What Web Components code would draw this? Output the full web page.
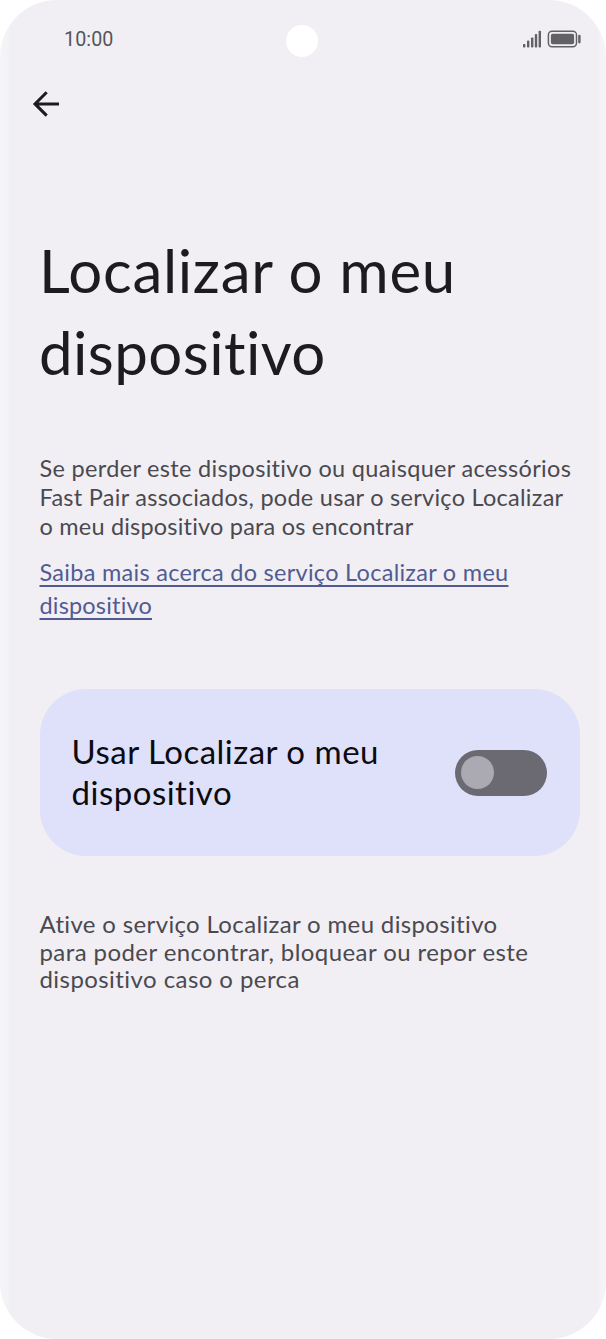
<!DOCTYPE html>
<html lang="pt">
<head>
<meta charset="utf-8">
<title>Localizar o meu dispositivo</title>
<style>
  html, body{ margin:0; background:#fff; }
  body{ font-family:Lato,"Open Sans",sans-serif; color:#1c1b20; }
</style>
</head>
<body>
<phone-screen>
  <status-bar slot="status">10:00</status-bar>
  <back-button slot="nav"></back-button>
  <page-title>
    <text-line style="--track:.7px">Localizar o meu</text-line>
    <text-line style="--track:.42px">dispositivo</text-line>
  </page-title>
  <info-text style="--top:60.6px; --lh:28.9px">
    <text-line style="--track:.32px">Se perder este dispositivo ou quaisquer acessórios</text-line>
    <text-line style="--track:.27px">Fast Pair associados, pode usar o serviço Localizar</text-line>
    <text-line style="--track:.2px">o meu dispositivo para os encontrar</text-line>
  </info-text>
  <info-link>
    <text-line style="--track:.28px">Saiba mais acerca do serviço Localizar o meu</text-line>
    <text-line style="--track:.18px">dispositivo</text-line>
  </info-link>
  <switch-card>
    <text-line style="--track:.5px">Usar Localizar o meu</text-line>
    <text-line style="--track:.5px">dispositivo</text-line>
    <toggle-switch slot="control"></toggle-switch>
  </switch-card>
  <info-text style="--top:54.4px; --lh:27.2px; --size:24px">
    <text-line style="--track:.35px">Ative o serviço Localizar o meu dispositivo</text-line>
    <text-line style="--track:.42px">para poder encontrar, bloquear ou repor este</text-line>
    <text-line style="--track:.43px">dispositivo caso o perca</text-line>
  </info-text>
</phone-screen>

<script>
const define = (name, html) => {
  const tpl = document.createElement('template')
  tpl.innerHTML = html
  customElements.define(name, class extends HTMLElement{
    constructor(){
      super()
      this.attachShadow({mode:'open'}).appendChild(tpl.content.cloneNode(true))
    }
  })
}

// one line of text, tracked with --track
define('text-line', `
  <style>
    :host{ display:block; white-space:nowrap; }
    span{ letter-spacing:var(--track, 0); text-decoration:var(--line, none); text-decoration-thickness:2px; text-underline-offset:3.5px; text-decoration-skip-ink:none; }
  </style>
  <span><slot></slot></span>
`)

define('phone-screen', `
  <style>
    :host{
      display:flex; flex-direction:column; box-sizing:border-box;
      width:606px; height:1339px; overflow:hidden;
      border-radius:57px;
      background:linear-gradient(90deg, #f5f4f7 0, #f3f2f5 8px, #f1eff3 10px, #f1eff3 598px, #f4f3f6 602px, #f4f3f6 100%);
    }
    main{ padding:0 26px 0 39.5px; }
  </style>
  <slot name="status"></slot>
  <slot name="nav"></slot>
  <main><slot></slot></main>
`)

define('status-bar', `
  <style>
    :host{
      display:grid; grid-template-columns:1fr 32px 1fr; align-items:center;
      height:32px; padding:25px 25px 0 64px;
      font:400 19.7px/28px Roboto,sans-serif; letter-spacing:.1px; color:#56555a;
    }
    .time{ margin-top:-3px; }
    .camera{ width:32px; height:32px; border-radius:50%; background:#fff; margin-left:-20.5px; }
    svg{ display:block; justify-self:end; margin-top:-5px; }
  </style>
  <span class="time"><slot></slot></span>
  <span class="camera"></span>
  <svg width="59" height="18" viewBox="0 0 59 18" fill="#626165">
    <rect x="1" y="14" width="2.4" height="3.5" rx=".8"/>
    <rect x="5" y="10.6" width="2.4" height="6.9" rx=".8"/>
    <rect x="9" y="7.4" width="2.4" height="10.1" rx=".8"/>
    <rect x="12.8" y="4" width="2.4" height="13.5" rx=".8"/>
    <rect x="16.6" y=".8" width="2.4" height="16.7" rx=".8"/>
    <rect x="26.4" y="1.3" width="28.1" height="15.4" rx="3.6" fill="none" stroke="#626165" stroke-width="1.5"/>
    <rect x="28.9" y="3.7" width="23.2" height="10.6" rx="1.8"/>
    <rect x="56.2" y="4.8" width="2.4" height="8.6" rx="1.1"/>
  </svg>
`)

define('back-button', `
  <style>
    :host{ display:block; padding:33px 0 0 32px; }
    svg{ display:block; }
  </style>
  <svg width="28" height="28" viewBox="0 0 28 28" fill="none" stroke="#1c1b20" stroke-width="3">
    <path d="M27 13.9H3M14.7 2.2L3 13.9l11.7 11.7"/>
  </svg>
`)

define('page-title', `
  <style>
    :host{ display:block; margin:112px 0 0 -.5px; font-size:60px; line-height:81.6px; }
  </style>
  <slot></slot>
`)

define('info-text', `
  <style>
    :host{ display:block; margin-top:var(--top); font-size:var(--size, 23.5px); line-height:var(--lh); color:#4a4950; }
  </style>
  <slot></slot>
`)

define('info-link', `
  <style>
    :host{ display:block; margin-top:15.9px; font-size:23.5px; line-height:33px; color:#515b92; --line:underline; }
  </style>
  <slot></slot>
`)

define('switch-card', `
  <style>
    :host{
      display:flex; align-items:center; justify-content:space-between; box-sizing:border-box;
      width:540.5px; height:167px; margin-top:66.6px; padding:0 33px 0 32px;
      border-radius:46px; background:#dfe0fa;
      font-size:33px; line-height:41.6px; color:#0b0b10;
    }
    .label{ padding-bottom:.6px; }
  </style>
  <div class="label"><slot></slot></div>
  <slot name="control"></slot>
`)

define('toggle-switch', `
  <style>
    :host{
      display:flex; align-items:center; box-sizing:border-box;
      width:92px; height:46px; margin-top:1px; padding-left:6px;
      border-radius:24px; background:#6b6a73;
    }
    i{ width:33px; height:33px; border-radius:50%; background:#aba9b2; }
  </style>
  <i></i>
`)
</script>
</body>
</html>
